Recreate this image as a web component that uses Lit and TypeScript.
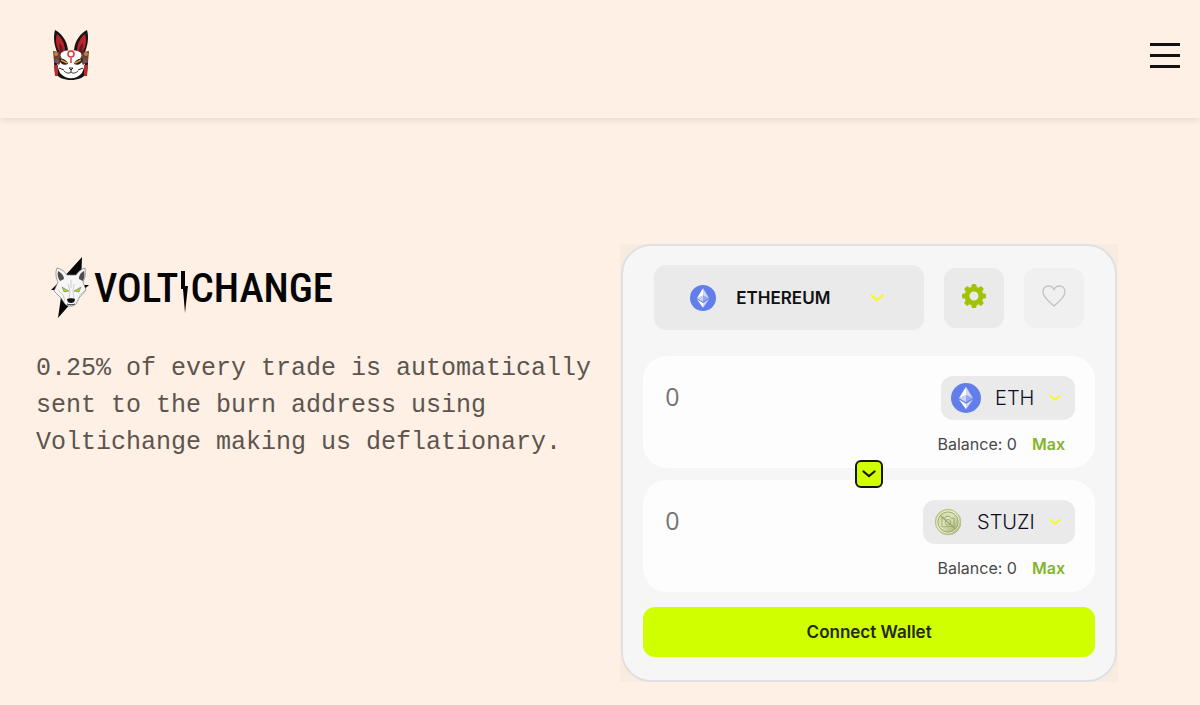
import { LitElement, html, css, svg } from "lit";
import { customElement, property } from "lit/decorators.js";

const ethIcon = html`<svg class="coin" viewBox="0 0 32 32" aria-hidden="true">
  <circle cx="16" cy="16" r="16" fill="#627eea"></circle>
  <path d="M16 4v8.9l7.5 3.3z" fill="#fff" fill-opacity=".7"></path>
  <path d="M16 4 8.5 16.2l7.5-3.3z" fill="#fff"></path>
  <path d="M16 22v6l7.5-10.4z" fill="#fff" fill-opacity=".7"></path>
  <path d="M16 28v-6l-7.5-4.4z" fill="#fff"></path>
  <path d="m16 20.6 7.5-4.4-7.5-3.3z" fill="#fff" fill-opacity=".3"></path>
  <path d="m8.5 16.2 7.5 4.4v-7.7z" fill="#fff" fill-opacity=".65"></path>
</svg>`;

const blankIcon = html`<svg class="coin" viewBox="0 0 32 32" aria-hidden="true">
  <defs>
    <linearGradient id="metal" x1="0" y1="0" x2="1" y2="1">
      <stop offset="0" stop-color="#c3cf8a"></stop>
      <stop offset=".45" stop-color="#dfe5c0"></stop>
      <stop offset="1" stop-color="#929f62"></stop>
    </linearGradient>
  </defs>
  <circle cx="16" cy="16" r="14" fill="url(#metal)"></circle>
  <g fill="none" stroke="#9aa76b" stroke-width="1">
    <circle cx="16" cy="16" r="13.500" stroke="#b5c17f"></circle>
    <circle cx="16" cy="16" r="11.800" stroke="#eff2dc"></circle>
    <circle cx="16" cy="16" r="10.800"></circle>
    <path d="M9.500 12h3l1.500-2h4l1.500 2h3v9h-13z"></path>
    <circle cx="16" cy="16.300" r="3"></circle>
    <path d="m8.500 9.500 15 13.500" stroke-width="1.500"></path>
  </g>
</svg>`;

const chevron = html`<svg class="chevron" viewBox="0 0 14 8" aria-hidden="true">
  <path d="m1.500 1.500 5.500 4.500 5.500-4.500" fill="none" stroke="currentColor" stroke-width="2.200" stroke-linecap="round"></path>
</svg>`;

@customElement("token-row")
export class TokenRow extends LitElement {
  @property() symbol = "ETH";
  @property() side = "";

  static styles = css`
    :host {
      display: block;
      background: #fdfdfd;
      border-radius: 24px;
      padding: 20px 20px 12px;
    }
    .line {
      display: flex;
      justify-content: space-between;
      align-items: center;
    }
    .amount {
      flex: 1;
      min-width: 0;
      border: 0;
      padding: 0 0 4px 2px;
      background: none;
      outline: none;
      font: 400 25px/36px "Open Sans", sans-serif;
      color: #444;
    }
    .amount::placeholder {
      color: #757575;
    }
    .token {
      display: flex;
      align-items: center;
      height: 44px;
      box-sizing: border-box;
      padding: 0 14px 0 10px;
      border-radius: 12px;
      background: #eaeaea;
    }
    .coin {
      width: 30px;
      height: 30px;
      margin-right: 14px;
    }
    .pick {
      appearance: none;
      border: 0;
      padding: 0;
      background: none;
      font: 300 20px Inter, sans-serif;
      color: #0b0d22;
    }
    .chevron {
      width: 12px;
      height: 8px;
      margin-left: 14px;
      color: #f8f81c;
    }
    .balance {
      display: flex;
      justify-content: flex-end;
      gap: 15px;
      padding: 13px 10px 1px;
      font: 400 16px/22px Inter, sans-serif;
      color: #484848;
    }
    .max {
      border: 0;
      padding: 0;
      background: none;
      font: 600 16px/22px Inter, sans-serif;
      color: #83b52c;
    }
  `;

  render() {
    return html`
      <div class="line">
        <input class="amount" placeholder="0" inputmode="decimal" aria-label="${this.side} amount" />
        <label class="token">
          ${this.symbol === "ETH" ? ethIcon : blankIcon}
          <select class="pick" aria-label="${this.side} token">
            <option>${this.symbol}</option>
          </select>
          ${chevron}
        </label>
      </div>
      <div class="balance">
        <span>Balance: 0</span>
        <button class="max">Max</button>
      </div>
    `;
  }
}

@customElement("swap-card")
export class SwapCard extends LitElement {
  static styles = css`
    :host {
      display: block;
      background: #f8ebe0;
      padding: 0 1px;
    }
    .card {
      border: 2px solid #dfe0e3;
      border-radius: 30px;
      background: #f6f6f6;
      padding: 19px 20px 23px;
    }
    .top {
      display: flex;
      align-items: center;
      gap: 20px;
      padding: 0 11px;
      margin-bottom: 26px;
    }
    .network {
      flex: 1;
      display: flex;
      align-items: center;
      height: 65px;
      box-sizing: border-box;
      padding: 0 40px 0 36px;
      border-radius: 12px;
      background: #eaeaea;
    }
    .coin {
      width: 26px;
      height: 26px;
      margin-right: 20px;
    }
    .pick {
      flex: 1;
      appearance: none;
      border: 0;
      padding: 0;
      background: none;
      font: 600 17px Inter, sans-serif;
      color: #111;
    }
    .chevron {
      width: 14px;
      height: 8px;
      color: #f8f81c;
    }
    .tool {
      display: grid;
      place-items: center;
      width: 60px;
      height: 60px;
      border: 0;
      padding: 0 0 4px;
      border-radius: 12px;
      background: #eaeaea;
    }
    .faint {
      background: #f0f0f0;
    }
    .tool svg {
      width: 24px;
      height: 24px;
    }
    .pair {
      position: relative;
      display: grid;
      grid-template-columns: minmax(0, 1fr);
      gap: 12px;
    }
    .flip {
      position: absolute;
      top: 50%;
      left: 50%;
      transform: translate(-50%, -50%);
      display: grid;
      place-items: center;
      width: 28px;
      height: 28px;
      padding: 0;
      border: 2px solid #14180a;
      border-radius: 6px;
      background: #d0ff00;
      color: #14180a;
    }
    .flip .chevron {
      color: inherit;
    }
    .connect {
      display: block;
      width: 100%;
      height: 50px;
      margin-top: 15px;
      border: 0;
      border-radius: 12px;
      background: #d0ff00;
      font: 600 17px Inter, sans-serif;
      color: #22290d;
    }
  `;

  render() {
    const teeth = [0, 45, 90, 135, 180, 225, 270, 315];
    return html`
      <section class="card" aria-label="Swap">
        <div class="top">
          <label class="network">
            ${ethIcon}
            <select class="pick" aria-label="Network">
              <option>ETHEREUM</option>
            </select>
            ${chevron}
          </label>
          <button class="tool" aria-label="Settings">
            <svg viewBox="0 0 24 24">
              <circle cx="12" cy="12" r="7" fill="none" stroke="#a0c307" stroke-width="5"></circle>
              ${teeth.map(
                (a) => svg`<rect x="9.500" y="0" width="5" height="5" rx="1.500" fill="#a0c307" transform="rotate(${a} 12 12)"></rect>`
              )}
            </svg>
          </button>
          <button class="tool faint" aria-label="Favourite">
            <svg viewBox="0 0 24 24">
              <path d="M12 22C8 18.500 1 13.500 1 7.700 1 4.200 3.500 2 6.500 2 9 2 11 3.300 12 5.500 13 3.300 15 2 17.500 2 20.500 2 23 4.200 23 7.700 23 13.500 16 18.500 12 22z" fill="none" stroke="#c2c2c2" stroke-width="1.300"></path>
            </svg>
          </button>
        </div>
        <div class="pair">
          <token-row symbol="ETH" side="From"></token-row>
          <token-row symbol="STUZI" side="To"></token-row>
          <button class="flip" aria-label="Switch tokens">${chevron}</button>
        </div>
        <button class="connect">Connect Wallet</button>
      </section>
    `;
  }
}

@customElement("app-root")
export class AppRoot extends LitElement {
  static styles = css`
    :host {
      display: block;
      min-height: 100vh;
      background: #fef0e5;
    }
    .bar {
      display: flex;
      justify-content: space-between;
      align-items: center;
      height: 118px;
      box-sizing: border-box;
      padding: 0 20px 8px 52px;
      box-shadow: 0 2px 6px rgba(90, 60, 30, 0.12);
    }
    .home,
    .mask {
      display: block;
    }
    .mask {
      width: 38px;
      height: 52px;
    }
    .menu {
      display: grid;
      gap: 8px;
      border: 0;
      padding: 0;
      background: none;
    }
    .menu span {
      width: 30px;
      height: 3px;
      background: #111;
    }
    .hero {
      display: grid;
      grid-template-columns: minmax(0, 1fr) 46%;
      gap: 20px;
      padding: 126px 82px 23px 36px;
    }
    .brand {
      display: flex;
      align-items: center;
      margin: 12px 0 0 14px;
      font: 500 41px/64px "Roboto Condensed", "Liberation Sans Narrow", sans-serif;
      color: #050505;
    }
    .wolf {
      width: 42px;
      height: 64px;
      margin-right: 2px;
    }
    .bolt {
      width: 8px;
      height: 42px;
      margin: 8px 2px 0;
    }
    .lead {
      margin: 30px 0 0;
      font: 400 25px/37px "Liberation Mono", monospace;
      color: #5c554f;
    }
  `;

  render() {
    return html`
      <header class="bar">
        <a class="home" href="#" aria-label="Home">
          <svg class="mask" viewBox="0 0 38 52">
            <path d="M3 1C9 4 15 11 16 21h6C23 11 29 4 35 1c2 7 1 16-3 24l4 9-1 10c-4 5-9 7-16 7S7 49 3 44L2 34l4-9C2 17 1 8 3 1z" fill="#171314"></path>
            <path d="M5 5c5 4 8 10 8 17l-5 2C4 18 3 11 5 5zM33 5c-5 4-8 10-8 17l5 2c4-6 5-13 3-19z" fill="#b9232b"></path>
            <path d="M7 14c3 2 4 5 4 9l-3 2zM31 14c-3 2-4 5-4 9l3 2z" fill="#641a1e"></path>
            <path d="M9 24c4-4 16-4 20 0l4 12-3 8c-6 7-16 7-22 0l-3-8z" fill="#fff"></path>
            <path d="M1 22l6 1 3 7-3 6-5-3zM37 22l-6 1-3 7 3 6 5-3z" fill="#694337"></path>
            <circle cx="4" cy="25" r="2" fill="#cf7b32"></circle><circle cx="34" cy="25" r="2" fill="#cf7b32"></circle>
            <circle cx="5" cy="32" r="2" fill="#735078"></circle><circle cx="33" cy="32" r="2" fill="#735078"></circle>
            <path d="M2 36h4v11H3zM32 36h4l-1 11h-3z" fill="#b52b2d"></path>
            <circle cx="19" cy="25" r="3" fill="none" stroke="#da3838" stroke-width="1.500"></circle>
            <path d="M19 29v5" stroke="#da3838" stroke-width="1.500"></path>
            <path d="M7 30c4-1 8 1 9 5-4 2-8 0-9-5zM31 30c-4-1-8 1-9 5 4 2 8 0 9-5z" fill="#272018"></path>
            <path d="M9 31l6 3M29 31l-6 3" stroke="#e09328" stroke-width="1.500"></path>
            <path d="M17 39h4l-2 2zM19 41v2c-2 2-5 1-7-1M19 43c2 2 5 1 7-1M7 39l5 2M31 39l-5 2" fill="none" stroke="#2a2222" stroke-width="1"></path>
          </svg>
        </a>
        <button class="menu" aria-label="Menu"><span></span><span></span><span></span></button>
      </header>
      <main class="hero">
        <section>
          <div class="brand">
            <svg class="wolf" viewBox="0 0 42 64" aria-hidden="true">
              <path d="M32 1 13 22 1 34h11L8 62l21-24 10-9-8 0z" fill="#060606"></path>
              <path d="M7 12c5 1 8 4 10 7h9c2-3 5-6 9-7 1 6 0 10-2 14l3 8-7 8-3 6c-3 3-8 3-11 0l-4-6-7-7 4-9c-2-4-3-9-1-14z" fill="#f6f6f6" stroke="#777" stroke-width=".7"></path>
              <path d="M8 15c4 2 6 5 6 8l-4 2c-2-3-3-6-2-10zM34 15c-4 2-5 5-5 8l4 2c1-3 2-6 1-10z" fill="#4c4c4c"></path>
              <path d="m12 31 7 4-5 1zM31 31l-7 4 5 1z" fill="#a6d82b" stroke="#555" stroke-width=".4"></path>
              <path d="M21 24v8M18 28l2 7-1 8M24 28l-1 7 1 8M8 34l5 5 2 6M35 34l-5 5-2 6" fill="none" stroke="#bbb" stroke-width=".7"></path>
              <path d="M17 43c2-1 6-1 8 0 0 3-2 4-4 4s-4-1-4-4z" fill="#111"></path>
              <path d="M17 48c2 1 6 1 8 0" fill="none" stroke="#333" stroke-width="1"></path>
            </svg>
            <span>VOLT</span>
            <svg class="bolt" viewBox="0 0 8 42" role="img" aria-label="I">
              <path d="M1 0h4v15h3L5 42 3 18H1z" fill="#050505"></path>
            </svg>
            <span>CHANGE</span>
          </div>
          <p class="lead">0.25% of every trade is automatically sent to the burn address using Voltichange making us deflationary.</p>
        </section>
        <swap-card></swap-card>
      </main>
    `;
  }
}
